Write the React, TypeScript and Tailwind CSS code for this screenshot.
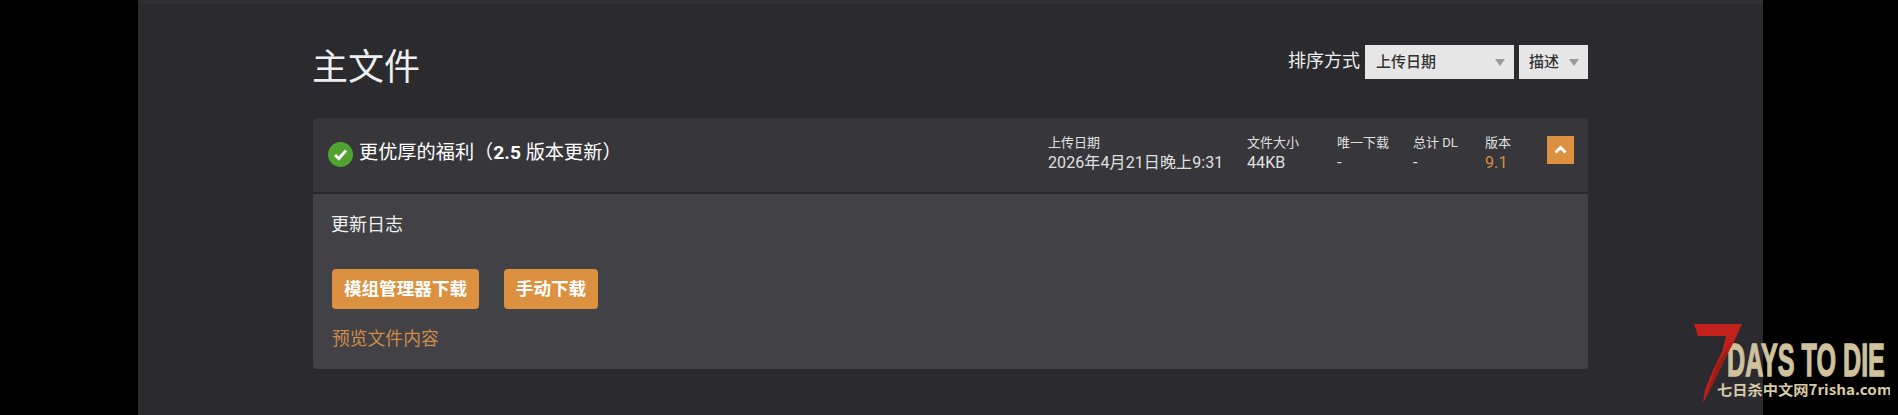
import React from "react";

const FONT = "font-['Roboto','Noto_Sans_CJK_SC',sans-serif]";

function Caret() {
  return <span className="w-0 h-0 border-l-[5px] border-r-[5px] border-t-[7px] border-l-transparent border-r-transparent border-t-[#9a9a9a]" />;
}

function Meta({ label, value, className, valueClass }: { label: string; value: string; className: string; valueClass?: string }) {
  return (
    <div className={`flex flex-col ${className}`}>
      <span className="text-[13px] leading-[19px] text-[#e0e0e0]">{label}</span>
      <span className={`text-[16px] leading-[21px] font-normal tracking-[0.1px] ${valueClass ?? "text-[#e0e0e0]"}`}>{value}</span>
    </div>
  );
}

function Logo() {
  return (
    <svg className="absolute left-[1690px] top-[320px] w-[200px] h-[88px]" viewBox="0 0 200 88">
      <text transform="translate(37 56) scale(0.535 1)" fontFamily="Liberation Sans" fontWeight="700" fontSize="47" fill="#cfc19c" stroke="#cfc19c" strokeWidth="1.4">DAYS TO DIE</text>
      <polygon points="4,4 52,4 44,22 30,48 20,70 13,83 15,70 19,60 24,48 32,32 36,16 8,16" fill="#c2201a" />
      <polygon points="26,46 40,24 32,46 22,66 16,76" fill="#9a1c17" />
      <text transform="translate(27 75) scale(1.09 1)" fontFamily="Noto Sans CJK SC" fontWeight="700" fontSize="14" fill="#d6cba6">七日杀中文网7risha.com</text>
    </svg>
  );
}

export default function App() {
  return (
    <div className={`relative w-[1898px] h-[415px] overflow-hidden bg-black ${FONT}`}>
      <div className="ml-[138px] w-[1625px] h-[415px] bg-[#2a2a2f] border-t-[4px] border-[#2f2f34] px-[175px]">
        <div className="flex items-start justify-between h-[114px]">
          <h2 className="mt-[41px] -ml-[1px] text-[36px] leading-[46px] text-[#eeeeee]">主文件</h2>
          <div className="flex items-center mt-[41px]">
            <span className="text-[18px] leading-[34px] text-[#eeeeee] mr-[5px] -mt-[2px]">排序方式</span>
            <div className="flex items-center justify-between w-[149px] h-[34px] bg-[#e6e6e6] pl-[11px] pr-[9px] text-[15px] font-medium text-[#333333]">
              <span>上传日期</span>
              <Caret />
            </div>
            <div className="flex items-center justify-between w-[69px] h-[34px] ml-[5px] bg-[#e6e6e6] pl-[10px] pr-[9px] text-[15px] font-medium text-[#333333]">
              <span>描述</span>
              <Caret />
            </div>
          </div>
        </div>

        <div className="w-[1275px] rounded-[4px] overflow-hidden">
          <div className="flex items-center h-[74px] bg-[#36363b] pl-[15px]">
            <span className="flex items-center justify-center w-[25px] h-[25px] -mt-[2px] rounded-full bg-[#4fa32e]">
              <svg width="15" height="13" viewBox="0 0 15 13">
                <path d="M2 7 L5.8 10.6 L13 2.6" fill="none" stroke="#ffffff" strokeWidth="3" />
              </svg>
            </span>
            <span className="ml-[6px] -mt-[4px] text-[19.2px] font-normal text-white whitespace-nowrap">更优厚的福利（<span className="font-bold">2.5</span> 版本更新）</span>
            <div className="ml-auto -mt-[4px] flex items-center">
              <Meta className="w-[199px]" label="上传日期" value="2026年4月21日晚上9:31" />
              <Meta className="w-[90px]" label="文件大小" value="44KB" />
              <Meta className="w-[76px]" label="唯一下载" value="-" />
              <Meta className="w-[72px]" label="总计 DL" value="-" />
              <Meta className="w-[62px]" label="版本" value="9.1" valueClass="text-[#d98c45]" />
              <button className="flex items-center justify-center w-[27px] h-[28px] mr-[14px] -mt-[7px] bg-[#dc9040]">
                <svg width="13" height="9" viewBox="0 0 13 9">
                  <path d="M1.5 7.5 L6.5 2.5 L11.5 7.5" fill="none" stroke="#ffffff" strokeWidth="3" />
                </svg>
              </button>
            </div>
          </div>
          <div className="h-[2px] bg-[#29292d]" />
          <div className="h-[175px] bg-[#414146] px-[19px] pt-[18px]">
            <p className="-ml-[1px] text-[18px] leading-[26px] text-[#f0f0f0]">更新日志</p>
            <div className="flex gap-[25px] mt-[31px]">
              <button className="h-[40px] w-[147px] rounded-[4px] bg-[#db9140] text-[17.6px] font-bold text-white">模组管理器下载</button>
              <button className="h-[40px] w-[94px] rounded-[4px] bg-[#db9140] text-[17.6px] font-bold text-white">手动下载</button>
            </div>
            <a className="block mt-[17px] text-[17.8px] leading-[26px] text-[#cf8b4a]">预览文件内容</a>
          </div>
        </div>
      </div>
      <Logo />
    </div>
  );
}
